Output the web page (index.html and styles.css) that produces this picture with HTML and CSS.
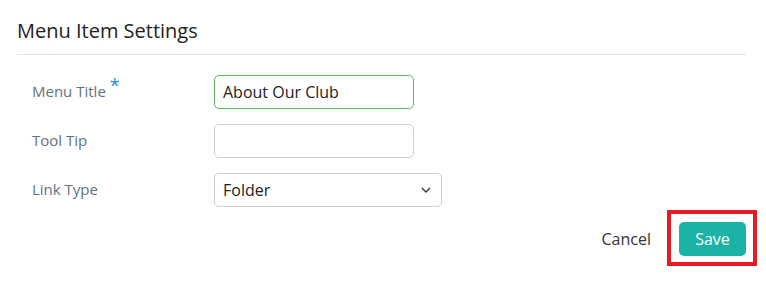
FILE: index.html
```html
<!DOCTYPE html>
<html>
<head>
<meta charset="utf-8">
<link rel="stylesheet" href="styles.css">
</head>
<body>
<div class="panel">
  <div class="header"><h2 class="title">Menu Item Settings</h2></div>
  <div class="form">
    <div class="row">
      <label class="label">Menu Title <span class="req">*</span></label>
      <div class="input valid">About Our Club</div>
    </div>
    <div class="row">
      <label class="label">Tool Tip</label>
      <div class="input"></div>
    </div>
    <div class="row">
      <label class="label">Link Type</label>
      <div class="input select"><span>Folder</span>
        <svg width="10" height="6" viewBox="0 0 10 6"><path d="M1 1l4 4 4-4" fill="none" stroke="#333" stroke-width="1.4"/></svg>
      </div>
    </div>
  </div>
  <div class="footer">
    <span class="cancel">Cancel</span>
    <div class="save-wrap">
      <button class="save">Save</button>
      <div class="highlight"></div>
    </div>
  </div>
</div>
</body>
</html>
```
FILE: styles.css
```css
* { box-sizing: border-box; }
html, body { height: 100%; }
body {
  margin: 0;
  background: #fff;
  font-family: "Open Sans", "Liberation Sans", sans-serif;
}
.panel {
  padding: 19px 20px 30px 17px;
}
.header {
  border-bottom: 1px solid #e3e3e3;
  padding-bottom: 11px;
}
.title {
  margin: 0;
  font-size: 20px;
  line-height: 24px;
  font-weight: 400;
  color: #222;
}
.form {
  padding: 20px 0 0 15px;
  display: flex;
  flex-direction: column;
  gap: 15px;
}
.row {
  display: flex;
  align-items: center;
}
.label {
  width: 182px;
  font-size: 15px;
  color: #5f7284;
  line-height: 20px;
  padding-bottom: 3px;
}
.req {
  color: #1c8fe0;
  font-size: 18px;
  position: relative;
  top: -5px;
}
.input {
  width: 200px;
  height: 34px;
  border: 1px solid #cfcfcf;
  border-radius: 5px;
  padding: 0 8px;
  font-size: 16px;
  line-height: 32px;
  color: #222;
}
.input.valid {
  border-color: #5cb85c;
}
.select {
  width: 228px;
  display: flex;
  align-items: center;
  justify-content: space-between;
  padding-right: 10px;
}
.footer {
  display: flex;
  justify-content: flex-end;
  align-items: center;
  gap: 28px;
  margin-top: 15px;
}
.cancel {
  font-size: 16px;
  color: #333;
}
.save-wrap {
  position: relative;
}
.save {
  display: block;
  width: 67px;
  height: 34px;
  border: none;
  border-radius: 5px;
  background: #1bb3a5;
  color: #fff;
  font-family: inherit;
  font-size: 16px;
  padding: 0;
}
.highlight {
  position: absolute;
  left: -12px;
  top: -12px;
  right: -11px;
  bottom: -10px;
  border: 4px solid #e51c23;
}
```
